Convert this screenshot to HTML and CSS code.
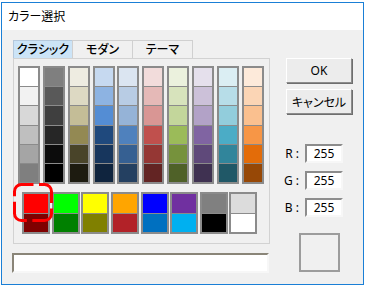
FILE: index.html
```html
<!DOCTYPE html>
<html lang="ja">

<head>
    <meta charset="UTF-8">
    <title>カラー選択</title>
    <link rel="stylesheet" href="styles.css">
</head>

<body>
    <div class="window">
        <div class="titlebar">カラー選択</div>

        <div class="client">
            <div class="left">
                <div class="tabs">
                    <div class="tab active">クラシック</div>
                    <div class="tab">モダン</div>
                    <div class="tab">テーマ</div>
                </div>

                <div class="panel">
                    <!-- theme colours, light to dark -->
                    <div class="palette">
                        <div class="shade-col">
                            <span style="background:#ffffff"></span><span style="background:#f2f2f2"></span><span style="background:#d8d8d8"></span><span style="background:#bfbfbf"></span><span style="background:#a5a5a5"></span><span style="background:#7f7f7f"></span>
                        </div>
                        <div class="shade-col">
                            <span style="background:#7f7f7f"></span><span style="background:#595959"></span><span style="background:#3f3f3f"></span><span style="background:#262626"></span><span style="background:#0c0c0c"></span><span style="background:#000000"></span>
                        </div>
                        <div class="shade-col">
                            <span style="background:#eeece1"></span><span style="background:#ddd9c3"></span><span style="background:#c4bd97"></span><span style="background:#938953"></span><span style="background:#494429"></span><span style="background:#1d1b10"></span>
                        </div>
                        <div class="shade-col">
                            <span style="background:#c6d9f0"></span><span style="background:#8db3e2"></span><span style="background:#548dd4"></span><span style="background:#1f497d"></span><span style="background:#17365d"></span><span style="background:#0f243e"></span>
                        </div>
                        <div class="shade-col">
                            <span style="background:#dbe5f1"></span><span style="background:#b8cce4"></span><span style="background:#95b3d7"></span><span style="background:#4f81bd"></span><span style="background:#366092"></span><span style="background:#244061"></span>
                        </div>
                        <div class="shade-col">
                            <span style="background:#f2dcdb"></span><span style="background:#e5b9b7"></span><span style="background:#d99694"></span><span style="background:#c0504d"></span><span style="background:#953734"></span><span style="background:#632423"></span>
                        </div>
                        <div class="shade-col">
                            <span style="background:#ebf1dd"></span><span style="background:#d7e3bc"></span><span style="background:#c3d69b"></span><span style="background:#9bbb59"></span><span style="background:#76923c"></span><span style="background:#4f6128"></span>
                        </div>
                        <div class="shade-col">
                            <span style="background:#e5e0ec"></span><span style="background:#ccc1d9"></span><span style="background:#b2a2c7"></span><span style="background:#8064a2"></span><span style="background:#5f497a"></span><span style="background:#3f3151"></span>
                        </div>
                        <div class="shade-col">
                            <span style="background:#dbeef3"></span><span style="background:#b7dde8"></span><span style="background:#92cddc"></span><span style="background:#4bacc6"></span><span style="background:#31859b"></span><span style="background:#205867"></span>
                        </div>
                        <div class="shade-col">
                            <span style="background:#fdeada"></span><span style="background:#fbd5b5"></span><span style="background:#fac08f"></span><span style="background:#f79646"></span><span style="background:#e36c09"></span><span style="background:#974806"></span>
                        </div>
                    </div>

                    <!-- standard colours -->
                    <div class="basic">
                        <div class="basic-col"><span style="background:#ff0000"></span><span style="background:#800000"></span></div>
                        <div class="basic-col"><span style="background:#00ff00"></span><span style="background:#008000"></span></div>
                        <div class="basic-col"><span style="background:#ffff00"></span><span style="background:#808000"></span></div>
                        <div class="basic-col"><span style="background:#ffa500"></span><span style="background:#b22228"></span></div>
                        <div class="basic-col"><span style="background:#0000ff"></span><span style="background:#0070c0"></span></div>
                        <div class="basic-col"><span style="background:#7030a0"></span><span style="background:#00b0f0"></span></div>
                        <div class="basic-col"><span style="background:#808080"></span><span style="background:#000000"></span></div>
                        <div class="basic-col"><span style="background:#dcdcdc"></span><span style="background:#ffffff"></span></div>
                    </div>

                    <svg class="marker" width="40" height="39" viewBox="0 0 40 39">
                        <rect x="1.5" y="1.5" width="37" height="36" rx="7" fill="none" stroke="#ff0000" stroke-width="3" stroke-dasharray="28 5.5" stroke-dashoffset="16"/>
                    </svg>
                </div>

                <input class="name-field" type="text">
            </div>

            <div class="right">
                <button class="btn" type="button">OK</button>
                <button class="btn" type="button">キャンセル</button>

                <div class="rgb">
                    <div class="rgb-row"><label>R :</label><input class="num" type="text" value="255"></div>
                    <div class="rgb-row"><label>G :</label><input class="num" type="text" value="255"></div>
                    <div class="rgb-row"><label>B :</label><input class="num" type="text" value="255"></div>
                </div>

                <div class="preview"></div>
            </div>
        </div>
    </div>
</body>

</html>
```

FILE: styles.css
```css
/* Colour picker dialog */

body {
    margin: 0;
    padding: 2px 0 0 1px;
    background: #fff;
    font-family: "Noto Sans", "Noto Sans CJK JP", sans-serif;
    font-size: 12px;
    font-feature-settings: "palt";
    color: #000;
}

.window {
    width: 363px;
    height: 283px;
    box-sizing: border-box;
    border: 1px solid #1a7fd6;
    background: #f0f0f0;
}

.titlebar {
    height: 27px;
    line-height: 27px;
    padding-left: 6px;
    background: #fff;
    font-size: 12px;
}

.client {
    display: flex;
    padding: 10px 0 0 11px;
}

.left {
    display: flex;
    flex-direction: column;
    width: 257px;
}

.tabs {
    display: flex;
    height: 18px;
}

.tab {
    width: 61px;
    height: 18px;
    box-sizing: border-box;
    margin-right: -1px;
    border: 1px solid #d0d0d0;
    border-bottom: none;
    background: #f0f0f0;
    text-align: center;
    line-height: 17px;
    font-size: 12px;
    font-weight: 500;
}

.tab.active {
    width: 60px;
    background: #cce4f7;
    border-color: #b4c8dc;
}

.panel {
    position: relative;
    height: 186px;
    box-sizing: border-box;
    padding: 7px 0 0 4px;
    border: 1px solid #d2d2d2;
}

.palette {
    display: flex;
    gap: 2.86px;
}

.shade-col {
    display: flex;
    flex-direction: column;
    gap: 1px;
    width: 22px;
    height: 118px;
    box-sizing: border-box;
    padding: 2px;
    background: #8b8b8b;
}

.shade-col span {
    flex: 1;
}

.basic {
    display: flex;
    gap: 1.65px;
    margin: 8px 0 0 4px;
}

.basic-col {
    display: flex;
    flex-direction: column;
    gap: 1px;
    width: 28px;
    height: 42px;
    box-sizing: border-box;
    padding: 2px;
    background: #8b8b8b;
}

.basic-col span {
    flex: 1;
}

.marker {
    position: absolute;
    left: -1px;
    top: 124px;
}

.name-field {
    width: 257px;
    height: 20px;
    box-sizing: border-box;
    margin: 9px 0 0 -1px;
    border: 2px solid;
    border-color: #8a8578 #f7f7f7 #f7f7f7 #8a8578;
    background: #fff;
    padding: 0;
}

.right {
    display: flex;
    flex-direction: column;
    margin-left: 16px;
    padding-top: 18px;
    width: 66px;
}

.btn {
    width: 66px;
    height: 25px;
    margin-bottom: 6px;
    padding: 0;
    box-sizing: border-box;
    border: 1px solid;
    border-color: #fff #8c8c8c #8c8c8c #fff;
    box-shadow: 1px 1px 0 #6e6e6e;
    background: #ececec;
    font-family: "Noto Sans", "Noto Sans CJK JP", sans-serif;
    font-size: 12px;
    font-feature-settings: "palt";
    color: #000;
}

.rgb {
    display: flex;
    flex-direction: column;
    gap: 8px;
    margin-top: 24px;
}

.rgb-row {
    display: flex;
    align-items: center;
    justify-content: flex-end;
    gap: 6px;
    padding-right: 9px;
}

.rgb-row label {
    flex-shrink: 0;
    white-space: nowrap;
    font-size: 12px;
}

.num {
    flex-shrink: 0;
    width: 38px;
    height: 19px;
    box-sizing: border-box;
    padding: 0;
    border: 2px solid;
    border-color: #8c8c8c #f7f7f7 #f7f7f7 #8c8c8c;
    background: #fff;
    text-align: center;
    font-family: "Noto Sans", sans-serif;
    font-size: 12px;
    color: #000;
}

.preview {
    width: 41px;
    height: 39px;
    box-sizing: border-box;
    margin: 16px 0 0 13px;
    border: 2px solid #9c9c9c;
}
```
